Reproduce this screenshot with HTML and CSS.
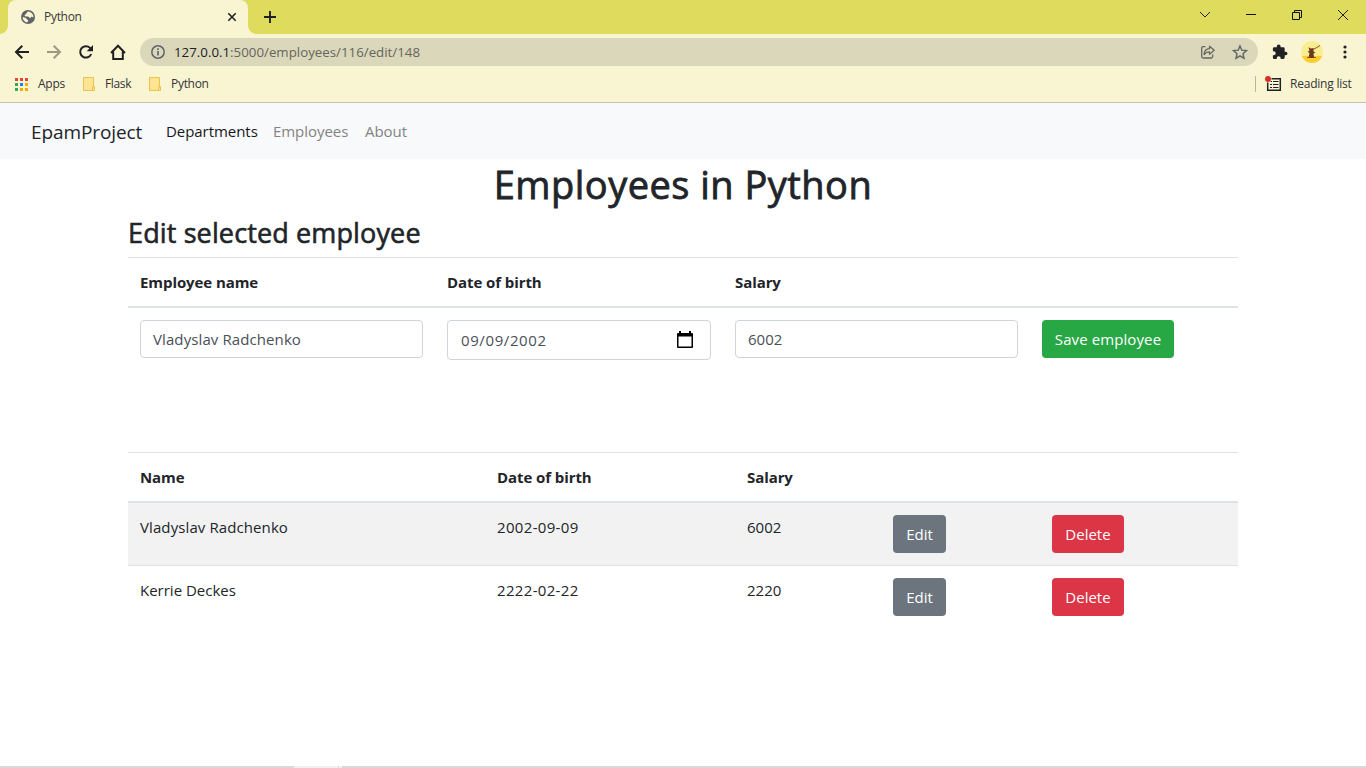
FILE: index.html
```html
<!DOCTYPE html>
<html lang="en">
<head>
<meta charset="utf-8">
<title>Python</title>
<link rel="stylesheet" href="styles.css">
</head>
<body>
<header class="browser">
  <div class="tabstrip">
    <div class="tab">
      <svg class="globe" width="14" height="14" viewBox="0 0 14 14"><circle cx="7" cy="7" r="7" fill="#5f6368"/><path d="M6.8 1.6c-1 .4-.6 1.5-1.5 1.9-.7.4-.5 1.1-1.3 1.3C3.300 5 3.600 6.300 4.600 6.400L7 6.500c1 .1.900 1.500 2.100 1.500.9 0 .7-1.200 1.500-1.300.8 0 1 .7 1.900.6A5.600 5.600 0 0 0 6.800 1.600zM1.500 7.200c.2 2.800 2.200 5 5 5.300-.2-.9.8-1.200.7-2.100-.2-.8-1.300-.5-1.500-1.300C5.400 7.700 3.300 7.200 1.500 7.200z" fill="#f9f5d2"/></svg>
      <span class="tab-title">Python</span>
      <svg class="tab-close" width="10" height="10" viewBox="0 0 10 10"><path d="M1.300 1.300l7.400 7.400M8.700 1.300L1.300 8.700" stroke="#202124" stroke-width="1.600"/></svg>
    </div>
    <svg class="newtab" width="12" height="12" viewBox="0 0 12 12"><path d="M6 0v12M0 6h12" stroke="#202124" stroke-width="1.900"/></svg>
    <div class="winbuttons">
      <svg width="12" height="12" viewBox="0 0 12 12"><path d="M1 3l5 5 5-5" fill="none" stroke="#222" stroke-width="1"/></svg>
      <svg width="12" height="12" viewBox="0 0 12 12"><path d="M1 5.500h10" stroke="#111"/></svg>
      <svg width="12" height="12" viewBox="0 0 12 12"><path d="M1.500 3.500h7v7h-7zM3.500 3.500v-2h7v7h-2" fill="none" stroke="#111"/></svg>
      <svg width="12" height="12" viewBox="0 0 12 12"><path d="M1 1l10 10M11 1L1 11" stroke="#222"/></svg>
    </div>
  </div>
  <div class="toolbar">
    <div class="navicons">
      <svg width="16" height="16" viewBox="0 0 16 16" fill="none" stroke="#202124" stroke-width="2"><path d="M15 8H2M8.300 1.700L2 8l6.300 6.300"/></svg>
      <svg width="16" height="16" viewBox="0 0 16 16" fill="none" stroke="#9b9983" stroke-width="2"><path d="M1 8h13M7.700 1.700L14 8l-6.300 6.300"/></svg>
      <svg width="16" height="16" viewBox="0 0 16 16"><path d="M13.200 10A5.700 5.700 0 1 1 12 3.900L13.500 5.500" fill="none" stroke="#202124" stroke-width="2"/><path d="M15 1v6.300H8.700z" fill="#202124"/></svg>
      <svg width="16" height="16" viewBox="0 0 16 16" fill="none" stroke="#202124" stroke-width="2"><path d="M1 9L8 1.800 15 9M3.200 7.500V15h9.600V7.500"/></svg>
    </div>
    <div class="address">
      <svg width="14" height="14" viewBox="0 0 14 14"><circle cx="7" cy="7" r="6.200" fill="none" stroke="#5f6368" stroke-width="1.500"/><path d="M7 6v4.500M7 3.300v1.600" stroke="#5f6368" stroke-width="1.600"/></svg>
      <span class="url"><b>127.0.0.1</b>:5000/employees/116/edit/148</span>
      <svg class="share" width="16" height="16" viewBox="0 0 16 16" fill="none" stroke="#66675e" stroke-width="1.300" stroke-linejoin="round"><path d="M5.500 2.700H3.200Q1.700 2.700 1.700 4.200v8.300q0 1.500 1.500 1.500h8q1.500 0 1.500-1.500V10.500M9.500 2.300v2.400C6 5 4.300 7.200 4.100 10.500 5.500 8.600 7.200 7.800 9.500 7.800v2.500l4.700-4z"/></svg>
      <svg width="16" height="16" viewBox="0 0 16 16"><path d="M8 1.900l1.800 4.300 4.700.4-3.500 3.100 1 4.600-4-2.500-4 2.500 1-4.600L1.500 6.600l4.700-.4z" fill="none" stroke="#5f6368" stroke-width="1.400"/></svg>
    </div>
    <svg class="puzzle" width="16" height="16" viewBox="0 0 16 16"><path d="M13.700 7.700h-1V4.700q0-1.400-1.400-1.400H8.600V2.500a1.900 1.900 0 0 0-3.800 0v.8H2.200Q.9 3.300.9 4.600v2.600h.8a2 2 0 0 1 0 4H.9v2.500Q.9 15 2.200 15h2.500v-.8a2 2 0 0 1 4 0v.8h2.600q1.400 0 1.400-1.400v-2.300h1a1.800 1.800 0 0 0 0-3.600z" fill="#202124"/></svg>
    <svg class="avatar" width="22" height="22" viewBox="0 0 22 22"><defs><clipPath id="round"><circle cx="11" cy="11" r="11"/></clipPath></defs><g clip-path="url(#round)"><path d="M0 0h22v22H0z" fill="#f9ed91"/><path d="M0 15h22v7H0z" fill="#ffcd2f"/><path d="M7.500 17l1-5-2-1.500 2-.5L7.500 6l2 1.500 3-.5v3.500l2 1-2 1 .7 4.500z" fill="#6b3a18"/><path d="M12 8.500l3-1.500 4-2.500M6 16.500h3M12 16.500h3" fill="none" stroke="#8a5428"/></g></svg>
    <svg class="dots" width="4" height="14" viewBox="0 0 4 14" fill="#202124"><circle cx="2" cy="2" r="1.600"/><circle cx="2" cy="7" r="1.600"/><circle cx="2" cy="12" r="1.600"/></svg>
  </div>
  <div class="bookmarks">
    <svg class="apps" width="13" height="13" viewBox="0 0 13 13"><path d="M0 0h3v3H0zM5 0h3v3H5zM10 0h3v3h-3z" fill="#ea4335"/><path d="M0 5h3v3H0zM0 10h3v3H0z" fill="#34a853"/><path d="M5 5h3v3H5z" fill="#1a82f0"/><path d="M10 5h3v3h-3zM5 10h3v3H5zM10 10h3v3h-3z" fill="#f5aa09"/></svg>
    <span class="bm bm-apps">Apps</span>
    <svg width="12" height="14" viewBox="0 0 12 14"><path d="M.5.5h10v9h1v4H.5z" fill="#ffe493" stroke="#ecc44c"/><path d="M9.500 13v-3h1.500" fill="none" stroke="#ecc44c"/></svg>
    <span class="bm bm-flask">Flask</span>
    <svg width="12" height="14" viewBox="0 0 12 14"><path d="M.5.5h10v9h1v4H.5z" fill="#ffe493" stroke="#ecc44c"/><path d="M9.500 13v-3h1.500" fill="none" stroke="#ecc44c"/></svg>
    <span class="bm bm-python">Python</span>
    <i class="divider"></i>
    <svg class="reading-icon" width="17" height="17" viewBox="0 0 17 17"><path d="M2.700 2.700h12.600v11.600H2.700z" fill="none" stroke="#202124" stroke-width="1.500"/><path d="M5 5.500h2M8 5.500h5.500M5 8.500h2M8 8.500h5.500M5 11.500h2M8 11.500h5.500" stroke="#202124" stroke-width="1.200"/><circle cx="3" cy="3" r="3.600" fill="#f9f5d2"/><circle cx="3" cy="3" r="3" fill="#d93025"/></svg>
    <span class="bm bm-reading">Reading list</span>
  </div>
</header>
<nav class="navbar">
  <a class="brand">EpamProject</a>
  <a class="link active">Departments</a>
  <a class="link employees">Employees</a>
  <a class="link about">About</a>
</nav>
<main class="content">
  <h1><span>Employees in Python</span></h1>
  <h2><span>Edit selected employee</span></h2>
  <section class="form-table">
    <div class="row head"><b class="h-empname">Employee name</b><b class="h-dob">Date of birth</b><b>Salary</b></div>
    <div class="row body">
      <div><div class="input"><span class="name">Vladyslav Radchenko</span></div></div>
      <div><div class="input date"><span>09/09/2002</span><svg width="16" height="18" viewBox="0 0 16 18"><path d="M2 0h2v2h8V0h2v2h1q1 0 1 1v13q0 1-1 1H1q-1 0-1-1V3q0-1 1-1h1zM1.500 5.500v10h13v-10z" fill="#000" fill-rule="evenodd"/></svg></div></div>
      <div><div class="input"><span>6002</span></div></div>
      <div><button class="btn save">Save employee</button></div>
    </div>
  </section>
  <section class="list-table">
    <div class="row head"><b>Name</b><b class="h-dob">Date of birth</b><b>Salary</b></div>
    <div class="row body striped">
      <span class="name">Vladyslav Radchenko</span><span class="iso">2002-09-09</span><span>6002</span>
      <div><button class="btn edit">Edit</button></div><div><button class="btn delete">Delete</button></div>
    </div>
    <div class="row body last">
      <span class="kerrie">Kerrie Deckes</span><span class="iso">2222-02-22</span><span>2220</span>
      <div><button class="btn edit">Edit</button></div><div><button class="btn delete">Delete</button></div>
    </div>
  </section>
</main>
<footer class="bottom-edge"><i></i><i></i></footer>
</body>
</html>
```
FILE: styles.css
```css
* { box-sizing: border-box; }
body { margin: 0; height: 768px; overflow: hidden; display: flex; flex-direction: column; background: #fff; color: #212529; font: 15px/24px "Open Sans", "Noto Sans", sans-serif; }
svg { display: block; flex: none; }
span, a, b { white-space: nowrap; }
.browser { height: 103px; flex: none; background: #f9f5d2; border-bottom: 1px solid #c7c4a8; }
.tabstrip { height: 34px; background: #dfdb5c; display: flex; align-items: center; padding-left: 8px; }
.tab { position: relative; width: 240px; height: 34px; background: #f9f5d2; border-radius: 8px 8px 0 0; display: flex; align-items: center; padding: 0 11px 0 13px; }
.tab::before, .tab::after { content: ""; position: absolute; bottom: 0; width: 8px; height: 8px; }
.tab::before { left: -8px; background: radial-gradient(circle at 0 0, #dfdb5c 7.5px, #f9f5d2 8px); }
.tab::after { right: -8px; background: radial-gradient(circle at 100% 0, #dfdb5c 7.5px, #f9f5d2 8px); }
.tab-title { margin-left: 9px; font-size: 12px; letter-spacing: -.3px; color: #37373a; }
.tab-close { margin-left: auto; }
.newtab { margin-left: 16px; }
.winbuttons { margin: 0 17px 5px auto; display: flex; gap: 34px; }
.toolbar { height: 36px; display: flex; align-items: center; padding-left: 14px; }
.navicons { display: flex; gap: 16px; width: 126px; }
.address { width: 1118px; height: 28px; border-radius: 14px; background: #dad7bb; display: flex; align-items: center; padding: 0 10px 0 11px; }
.url { margin-left: 9px; font-size: 13.3px; color: #66665c; }
.url b { font-weight: 400; color: #202124; }
.share { margin: 0 16px 0 auto; }
.puzzle { margin-left: 14px; }
.avatar { margin-left: 13px; }
.dots { margin-left: 19.5px; }
.bookmarks { height: 28px; display: flex; align-items: center; padding-left: 15px; }
.bm { font-size: 12px; letter-spacing: -.22px; color: #333438; }
.bm-apps { margin: 0 18px 0 10px; width: 27px; }
.bm-flask { margin: 0 18px 0 10px; width: 26px; letter-spacing: -.35px; }
.bm-python { margin-left: 10px; letter-spacing: -.3px; }
.divider { width: 1px; height: 16px; background: #b8b69a; margin-left: auto; }
.reading-icon { margin-left: 9px; }
.bm-reading { width: 62px; margin: 0 14px 0 8px; }
.navbar { height: 56px; flex: none; background: #f8f9fa; display: flex; align-items: center; padding-left: 31px; }
.brand { width: 111px; margin-right: 24px; font-size: 19px; letter-spacing: -.1px; padding-top: 1px; }
.link { color: #828384; width: 76px; margin-right: 16px; letter-spacing: -.05px; }
.active { color: #16171a; width: 91px; }
.content { width: 1110px; margin: 0 auto; }
h1, h2 { margin: 0; font-weight: 400; }
h1 { height: 56px; font-size: 38px; line-height: 51px; text-align: center; letter-spacing: .48px; -webkit-text-stroke: .8px; }
h2 { height: 42px; font-size: 27px; line-height: 36px; letter-spacing: .13px; -webkit-text-stroke: .6px; }
.row { display: grid; }
.row > * { padding-left: 12px; }
.form-table .row { grid-template-columns: 307px 288px 307px 208px; }
.list-table .row { grid-template-columns: 357px 250px 146px 159px 198px; }
.head { height: 51px; border-top: 1px solid #dee2e6; border-bottom: 2px solid #dee2e6; padding-top: 12px; }
.head b { font-size: 15px; font-weight: 700; line-height: 24px; letter-spacing: -.08px; }
.body { height: 63px; padding-top: 12px; }
.name { letter-spacing: .1px; }
.iso { letter-spacing: .33px; }
.form-table { height: 195px; }
.input { width: 283px; height: 38px; border: 1px solid #ced4da; border-radius: 4px; padding: 0 12px; color: #495057; display: flex; align-items: center; }
.date { width: 264px; height: 40px; padding: 0 17px 0 13px; justify-content: space-between; letter-spacing: .6px; }
.btn { display: block; height: 38px; border: 0; border-radius: 4px; padding: 0; color: #fff; font: inherit; text-align: center; }
.save { width: 132px; background: #28a745; letter-spacing: .1px; }
.edit { width: 53px; background: #6c757d; }
.delete { width: 72px; background: #dc3545; }
.striped { background: #f2f2f2; height: 62px; }
.last { border-top: 1px solid #dee2e6; }
.bottom-edge { height: 2px; margin-top: auto; background: #d9d9d9; display: flex; padding-left: 294px; }
.bottom-edge i { width: 44px; background: #f0f0f0; }
.bottom-edge i + i { width: 3px; margin-left: 1px; }
```
